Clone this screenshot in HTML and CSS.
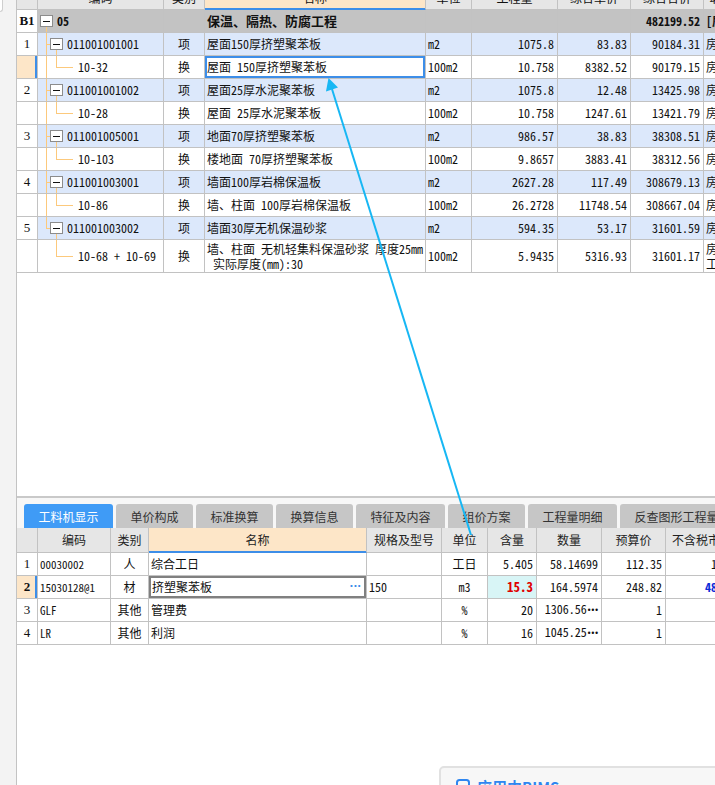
FILE: index.html
```html
<!DOCTYPE html>
<html lang="zh-CN">
<head>
<meta charset="utf-8">
<title>工料机显示</title>
<link rel="stylesheet" href="styles.css">
</head>
<body>
<div class="app">
  <aside class="sidebar"><div class="sb-box"></div></aside>
  <main class="main">
    <section class="upper">
      <table class="grid top-grid">
        <colgroup>
          <col class="w21"><col class="w126"><col class="w41"><col class="w221"><col class="w46"><col class="w86"><col class="w73"><col class="w73"><col class="w60">
        </colgroup>
        <thead>
          <tr class="r-head">
            <th></th><th>编码</th><th>类别</th><th class="h-sel">名称</th><th>单位</th><th>工程量</th><th>综合单价</th><th>综合合价</th><th>取费专业</th>
          </tr>
        </thead>
        <tbody>
          <tr class="r-b1">
            <td class="num b">B1</td>
            <td class="tree t-b1"><div class="node"><span class="tbox b1box"></span><span class="ncode b">05</span></div></td>
            <td></td>
            <td class="b cjk">保温、隔热、防腐工程</td>
            <td></td><td></td><td></td>
            <td class="rt b">482199.52</td>
            <td class="b">[房屋建筑与装饰工程]</td>
          </tr>
          <tr class="r-item">
            <td class="num">1</td>
            <td class="tree t-item"><div class="node"><span class="tbox ibox"></span><span class="ncode">011001001001</span></div></td>
            <td class="ct">项</td>
            <td>屋面150厚挤塑聚苯板</td>
            <td>m2</td><td class="rt">1075.8</td><td class="rt">83.83</td><td class="rt">90184.31</td><td>房屋建筑与装饰工程</td>
          </tr>
          <tr class="r-sub">
            <td class="num sel-num"></td>
            <td class="tree t-sub"><div class="node"><span class="scode">10-32</span></div></td>
            <td class="ct">换</td>
            <td class="sel-cell">屋面 150厚挤塑聚苯板</td>
            <td>100m2</td><td class="rt">10.758</td><td class="rt">8382.52</td><td class="rt">90179.15</td><td>房屋建筑与装饰工程</td>
          </tr>
          <tr class="r-item">
            <td class="num">2</td>
            <td class="tree t-item"><div class="node"><span class="tbox ibox"></span><span class="ncode">011001001002</span></div></td>
            <td class="ct">项</td>
            <td>屋面25厚水泥聚苯板</td>
            <td>m2</td><td class="rt">1075.8</td><td class="rt">12.48</td><td class="rt">13425.98</td><td>房屋建筑与装饰工程</td>
          </tr>
          <tr class="r-sub">
            <td class="num"></td>
            <td class="tree t-sub"><div class="node"><span class="scode">10-28</span></div></td>
            <td class="ct">换</td>
            <td>屋面 25厚水泥聚苯板</td>
            <td>100m2</td><td class="rt">10.758</td><td class="rt">1247.61</td><td class="rt">13421.79</td><td>房屋建筑与装饰工程</td>
          </tr>
          <tr class="r-item">
            <td class="num">3</td>
            <td class="tree t-item"><div class="node"><span class="tbox ibox"></span><span class="ncode">011001005001</span></div></td>
            <td class="ct">项</td>
            <td>地面70厚挤塑聚苯板</td>
            <td>m2</td><td class="rt">986.57</td><td class="rt">38.83</td><td class="rt">38308.51</td><td>房屋建筑与装饰工程</td>
          </tr>
          <tr class="r-sub">
            <td class="num"></td>
            <td class="tree t-sub"><div class="node"><span class="scode">10-103</span></div></td>
            <td class="ct">换</td>
            <td>楼地面 70厚挤塑聚苯板</td>
            <td>100m2</td><td class="rt">9.8657</td><td class="rt">3883.41</td><td class="rt">38312.56</td><td>房屋建筑与装饰工程</td>
          </tr>
          <tr class="r-item">
            <td class="num">4</td>
            <td class="tree t-item"><div class="node"><span class="tbox ibox"></span><span class="ncode">011001003001</span></div></td>
            <td class="ct">项</td>
            <td>墙面100厚岩棉保温板</td>
            <td>m2</td><td class="rt">2627.28</td><td class="rt">117.49</td><td class="rt">308679.13</td><td>房屋建筑与装饰工程</td>
          </tr>
          <tr class="r-sub">
            <td class="num"></td>
            <td class="tree t-sub"><div class="node"><span class="scode">10-86</span></div></td>
            <td class="ct">换</td>
            <td>墙、柱面 100厚岩棉保温板</td>
            <td>100m2</td><td class="rt">26.2728</td><td class="rt">11748.54</td><td class="rt">308667.04</td><td>房屋建筑与装饰工程</td>
          </tr>
          <tr class="r-item">
            <td class="num">5</td>
            <td class="tree t-item t-last"><div class="node"><span class="tbox ibox"></span><span class="ncode">011001003002</span></div></td>
            <td class="ct">项</td>
            <td>墙面30厚无机保温砂浆</td>
            <td>m2</td><td class="rt">594.35</td><td class="rt">53.17</td><td class="rt">31601.59</td><td>房屋建筑与装饰工程</td>
          </tr>
          <tr class="r-sub r-tall">
            <td class="num"></td>
            <td class="tree t-sub t-sublast"><div class="node"><span class="scode">10-68 + 10-69</span></div></td>
            <td class="ct">换</td>
            <td class="wrap">墙、柱面 无机轻集料保温砂浆 厚度25mm<br>&nbsp;实际厚度(mm):30</td>
            <td>100m2</td><td class="rt">5.9435</td><td class="rt">5316.93</td><td class="rt">31601.17</td><td class="wrap">房屋建筑<br>工程</td>
          </tr>
        </tbody>
      </table>
    </section>

    <div class="splitter"></div>

    <nav class="tabs">
      <span class="tab active">工料机显示</span>
      <span class="tab">单价构成</span>
      <span class="tab">标准换算</span>
      <span class="tab">换算信息</span>
      <span class="tab">特征及内容</span>
      <span class="tab">组价方案</span>
      <span class="tab">工程量明细</span>
      <span class="tab">反查图形工程量</span>
    </nav>

    <section class="lower">
      <table class="grid bot-grid">
        <colgroup>
          <col class="w21"><col class="w73"><col class="w38"><col class="w218"><col class="w75"><col class="w46"><col class="w49"><col class="w65"><col class="w64"><col class="w85">
        </colgroup>
        <thead>
          <tr class="r-bhead">
            <th></th><th>编码</th><th>类别</th><th class="h-sel b">名称</th><th>规格及型号</th><th>单位</th><th>含量</th><th>数量</th><th>预算价</th><th>不含税市场价</th>
          </tr>
        </thead>
        <tbody>
          <tr>
            <td class="num">1</td><td class="bcode">00030002</td><td class="ct">人</td><td>综合工日</td><td></td><td class="ct">工日</td><td class="rt">5.405</td><td class="rt">58.14699</td><td class="rt">112.35</td><td class="rt">112.35</td>
          </tr>
          <tr>
            <td class="num sel-num b">2</td><td class="bcode">15030128@1</td><td class="ct">材</td><td class="edit-cell"><span class="edit-in"><span>挤塑聚苯板</span><span class="more">···</span></span></td><td>150</td><td class="ct">m3</td><td class="rt qty-hl">15.3</td><td class="rt">164.5974</td><td class="rt">248.82</td><td class="rt price-b">48.5536</td>
          </tr>
          <tr>
            <td class="num">3</td><td class="bcode">GLF</td><td class="ct">其他</td><td>管理费</td><td></td><td class="ct">%</td><td class="rt">20</td><td class="rt">1306.56<span class="dots">•••</span></td><td class="rt">1</td><td></td>
          </tr>
          <tr>
            <td class="num">4</td><td class="bcode">LR</td><td class="ct">其他</td><td>利润</td><td></td><td class="ct">%</td><td class="rt">16</td><td class="rt">1045.25<span class="dots">•••</span></td><td class="rt">1</td><td></td>
          </tr>
        </tbody>
      </table>
    </section>
  </main>
</div>

<div class="float-card">
  <svg class="fc-icon" width="14" height="16" viewBox="0 0 14 16"><rect x="1" y="1" width="12" height="14" rx="2.5" fill="none" stroke="#2f86f0" stroke-width="2"/></svg>
  <span class="fc-text">应用中BIMS</span>
</div>

<svg class="arrow" width="715" height="785" viewBox="0 0 715 785">
  <line x1="471" y1="535" x2="332" y2="89" stroke="#17b7f4" stroke-width="2"/>
  <polygon points="328.5,78 338,87.5 326,91.5" fill="#17b7f4"/>
</svg>
</body>
</html>
```

FILE: styles.css
```css
* { box-sizing: border-box; }
html, body { margin: 0; padding: 0; }
body {
  width: 715px;
  height: 785px;
  overflow: hidden;
  position: relative;
  background: #fff;
  color: #111;
  font-family: "Noto Sans Mono CJK SC", "Noto Sans CJK SC", "DejaVu Sans Mono", monospace;
  font-size: 12px;
  --tl: #fcc97c;
  --blue: #3d8ee8;
  --grid: #c2c2c2;
}

.app { display: flex; height: 785px; }

.sidebar {
  width: 17px;
  flex: none;
  background: #f3f3f3;
  border-right: 1px solid #c3c3c3;
}
.sb-box {
  width: 3px;
  height: 12px;
  background: #fff;
  border-right: 1px solid #cfcfcf;
  border-bottom: 1px solid #cfcfcf;
  border-bottom-right-radius: 3px;
}

.main {
  flex: 1;
  min-width: 0;
  display: flex;
  flex-direction: column;
  overflow: hidden;
}

.upper { height: 496px; flex: none; overflow: hidden; }

.grid {
  border-collapse: separate;
  border-spacing: 0;
  table-layout: fixed;
}
.top-grid { width: 747px; margin-top: -13px; }
.bot-grid { width: 734px; }

.w21 { width: 21px; } .w126 { width: 126px; } .w41 { width: 41px; } .w221 { width: 221px; }
.w46 { width: 46px; } .w86 { width: 86px; } .w73 { width: 73px; } .w60 { width: 60px; }
.w38 { width: 38px; } .w218 { width: 218px; } .w75 { width: 75px; } .w49 { width: 49px; }
.w65 { width: 65px; } .w64 { width: 64px; } .w85 { width: 85px; }

.grid th, .grid td {
  border-right: 1px solid var(--grid);
  border-bottom: 1px solid var(--grid);
  padding: 0 2px;
  white-space: nowrap;
  overflow: hidden;
  text-align: left;
  vertical-align: middle;
  line-height: 14px;
}
.grid tr { height: 23px; }
.grid tr.r-tall { height: 33px; }
.grid th {
  background: #e6e6e6;
  font-weight: normal;
  text-align: center;
  font-family: "Noto Sans CJK SC", sans-serif;
}
.grid th.h-sel {
  background: #fde6c8;
  border-bottom-color: var(--blue);
  box-shadow: inset 0 -1px 0 var(--blue);
}
.r-bhead { height: 25px !important; }
.grid .r-bhead th { color: #222; }

.b { font-weight: bold; }
.ct { text-align: center !important; }
.rt { text-align: right !important; padding-right: 3px !important; }
.num { text-align: center !important; background: #fff; font-family: "Liberation Serif", "Noto Sans CJK SC", serif; font-size: 13px; }
.num.b { font-family: "Liberation Serif", serif; }
.cjk { font-family: "Noto Sans CJK SC", sans-serif; font-size: 13px; }

.r-b1 td { background-color: #c3c3c3; }
.r-item td { background-color: #dce8fb; }
.r-b1 td.num, .r-item td.num { background-color: #fff; }
.r-sub td { background-color: #fff; }

.sel-num { background-color: #fde6c8 !important; box-shadow: inset -2px 0 0 var(--blue); }
.sel-cell { box-shadow: inset 0 0 0 2px var(--blue); }

.wrap { white-space: normal !important; line-height: 15px !important; }

/* tree column */
.tree { padding: 0 !important; background-repeat: no-repeat; }
.node { display: flex; align-items: center; height: 22px; }
.r-tall .node { height: 32px; }
.tbox {
  width: 13px;
  height: 12px;
  flex: none;
  border: 1px solid #8c8c8c;
  background: #fff;
  display: flex;
  align-items: center;
  justify-content: center;
}
.tbox::before { content: ""; width: 7px; height: 1px; background: #111; }
.b1box { margin-left: 2px; }
.ibox { margin-left: 12px; }
.ncode { margin-left: 4px; }
.scode { margin-left: 40px; }

.t-b1 {
  background-image: linear-gradient(var(--tl), var(--tl));
  background-size: 1px 6px;
  background-position: 8px 17px;
}
.t-item {
  background-image: linear-gradient(var(--tl), var(--tl)), linear-gradient(var(--tl), var(--tl)), linear-gradient(var(--tl), var(--tl));
  background-size: 1px 100%, 4px 1px, 1px 6px;
  background-position: 8px 0, 8px 11px, 18px 17px;
}
.t-item.t-last { background-size: 1px 11px, 4px 1px, 1px 6px; }
.t-sub {
  background-image: linear-gradient(var(--tl), var(--tl)), linear-gradient(var(--tl), var(--tl)), linear-gradient(var(--tl), var(--tl));
  background-size: 1px 100%, 1px 11px, 17px 1px;
  background-position: 8px 0, 18px 0, 18px 11px;
}
.t-sub.t-sublast {
  background-image: linear-gradient(var(--tl), var(--tl)), linear-gradient(var(--tl), var(--tl));
  background-size: 1px 16px, 17px 1px;
  background-position: 18px 0, 18px 16px;
}

/* splitter + tabs */
.splitter { height: 2px; flex: none; background: #c9c9c9; }
.tabs {
  flex: none;
  display: flex;
  gap: 3px;
  padding: 6px 0 0 7px;
  background: #f7f7f7;
  height: 30px;
  white-space: nowrap;
}
.tab {
  flex: none;
  height: 24px;
  padding: 0 14.5px;
  display: flex;
  align-items: center;
  background: #c6c6c6;
  color: #333;
  border-radius: 3px 3px 0 0;
  font-family: "Noto Sans CJK SC", sans-serif;
  font-size: 12px;
}
.tab.active { background: #3f9bf6; color: #fff; }

.lower { flex: 1; }
.bot-grid th { font-size: 12px; }
.bcode { font-size: 11px; }
.edit-cell { padding: 0 !important; }
.edit-in {
  display: flex;
  align-items: center;
  justify-content: space-between;
  height: 22px;
  border: 2px solid #808080;
  padding: 0 3px 0 1px;
}
.more { flex: none; color: var(--blue); font-weight: bold; letter-spacing: 0; font-family: "DejaVu Sans", sans-serif; font-size: 10px; }
.qty-hl { background: #d8f5f6; color: #e00000; font-weight: bold; font-size: 13px; }
.price-b { color: #0a2bd8; font-weight: bold; }
.dots { font-size: 8px; letter-spacing: -1px; vertical-align: middle; font-family: "DejaVu Sans", sans-serif; }

/* floating card (overlay widget) */
.float-card {
  position: absolute;
  left: 439px;
  top: 766px;
  width: 300px;
  height: 50px;
  background: #f7f7f7;
  border: 2px solid #e1e1e1;
  border-radius: 5px;
  display: flex;
  align-items: flex-start;
  padding: 11px 0 0 15px;
  gap: 7px;
}
.fc-text {
  color: #2f86f0;
  font-family: "Noto Sans CJK SC", sans-serif;
  font-size: 15px;
  font-weight: bold;
  line-height: 16px;
}

.arrow { position: absolute; left: 0; top: 0; pointer-events: none; }
```
